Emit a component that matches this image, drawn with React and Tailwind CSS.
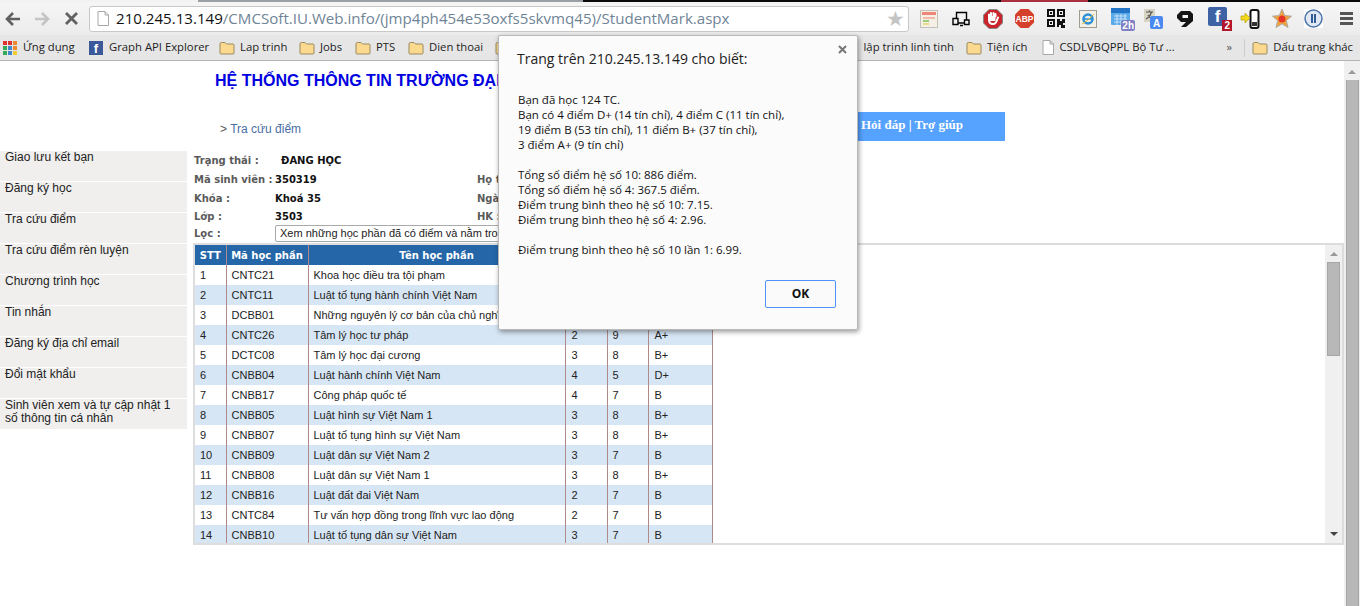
import React from 'react';

const ui = "font-['Open_Sans','Noto_Sans',sans-serif]";

const rows = [
  ['1', 'CNTC21', 'Khoa học điều tra tội phạm', '', '', ''],
  ['2', 'CNTC11', 'Luật tố tụng hành chính Việt Nam', '', '', ''],
  ['3', 'DCBB01', 'Những nguyên lý cơ bản của chủ nghĩa', '', '', ''],
  ['4', 'CNTC26', 'Tâm lý học tư pháp', '2', '9', 'A+'],
  ['5', 'DCTC08', 'Tâm lý học đại cương', '3', '8', 'B+'],
  ['6', 'CNBB04', 'Luật hành chính Việt Nam', '4', '5', 'D+'],
  ['7', 'CNBB17', 'Công pháp quốc tế', '4', '7', 'B'],
  ['8', 'CNBB05', 'Luật hình sự Việt Nam 1', '3', '8', 'B+'],
  ['9', 'CNBB07', 'Luật tố tụng hình sự Việt Nam', '3', '8', 'B+'],
  ['10', 'CNBB09', 'Luật dân sự Việt Nam 2', '3', '7', 'B'],
  ['11', 'CNBB08', 'Luật dân sự Việt Nam 1', '3', '8', 'B+'],
  ['12', 'CNBB16', 'Luật đất đai Việt Nam', '2', '7', 'B'],
  ['13', 'CNTC84', 'Tư vấn hợp đồng trong lĩnh vực lao động', '2', '7', 'B'],
  ['14', 'CNBB10', 'Luật tố tụng dân sự Việt Nam', '3', '7', 'B'],
];

const menu = [
  'Giao lưu kết bạn',
  'Đăng ký học',
  'Tra cứu điểm',
  'Tra cứu điểm rèn luyện',
  'Chương trình học',
  'Tin nhắn',
  'Đăng ký địa chỉ email',
  'Đổi mật khẩu',
];

const Folder = () => (
  <svg width="16" height="14" viewBox="0 0 16 14" className="shrink-0">
    <path d="M1 3 Q1 1.5 2.5 1.5 H6 L7.5 3 H14 Q15 3 15 4 V12 Q15 13 14 13 H2 Q1 13 1 12 Z" fill="#fbd98f" stroke="#9a8a60" />
  </svg>
);

const PageIcon = () => (
  <svg width="12" height="15" viewBox="0 0 12 15" className="shrink-0">
    <path d="M1 .5 H8 L11.5 4 V14.5 H1 Z M8 .5 V4 H11.5" fill="#fff" stroke="#a8a8a8" />
  </svg>
);

const Bookmark = ({ icon, label, className = '' }) => (
  <div className={`flex items-center gap-[5px] shrink-0 whitespace-nowrap ${className}`}>
    {icon}
    <span>{label}</span>
  </div>
);

const toolbarIcons = [
  <svg key="a" width="18" height="18" viewBox="0 0 18 18" className="ml-[11px]">
    <rect x=".5" y=".5" width="17" height="17" fill="#f4f0e6" stroke="#c4c0b8" />
    <rect x="2" y="2" width="14" height="3" fill="#f0857a" />
    <rect x="3" y="7" width="12" height="2" fill="#f3b9a8" />
    <rect x="3" y="10" width="6" height="2" fill="#9ecb7c" />
    <rect x="3" y="13" width="6" height="2" fill="#e8dc8c" />
  </svg>,
  <svg key="b" width="18" height="16" viewBox="0 0 18 16" className="ml-[14px]">
    <path d="M4.5 7 V1.5 H14.5 V9 M1 7.5 H6 V13.5 H1 Z M6 12 H12 M8 14.5 H11 M12.5 9 H17 V13.5 H12.5 Z" fill="none" stroke="#000" strokeWidth="1.4" />
  </svg>,
  <svg key="c" width="20" height="20" viewBox="0 0 20 20" className="ml-[13px]">
    <path d="M6 .5 H14 L19.5 6 V14 L14 19.5 H6 L.5 14 V6 Z" fill="#c8242c" stroke="#888" />
    <path d="M6 7 V5.5 M8 7 V4 M10.5 7 V4 M12.5 7.5 V5 M6 6 V11 Q6 15 10 15 Q13 15 14 11 L15 8.5" fill="none" stroke="#fff" strokeWidth="2" strokeLinecap="round" />
    <path d="M7 7 H12.5 V12 H7 Z" fill="#fff" />
  </svg>,
  <svg key="d" width="19" height="19" viewBox="0 0 19 19" className="ml-[12px]">
    <path d="M5.5 0 H13.5 L19 5.5 V13.5 L13.5 19 H5.5 L0 13.5 V5.5 Z" fill="#d5402b" />
    <text x="9.5" y="12.5" textAnchor="middle" fontFamily="Liberation Sans" fontWeight="700" fontSize="8.5" fill="#fff">ABP</text>
  </svg>,
  <svg key="e" width="19" height="19" viewBox="0 0 19 19" className="ml-[13px]" shapeRendering="crispEdges">
    <path d="M0 0 H8 V8 H0 Z M2 2 V6 H6 V2 Z M3 3 H5 V5 H3 Z M10 0 H18 V8 H10 Z M12 2 V6 H16 V2 Z M13 3 H15 V5 H13 Z M0 10 H8 V18 H0 Z M2 12 V16 H6 V12 Z M3 13 H5 V15 H3 Z M10 10 H13 V12 H15 V10 H18 V14 H16 V16 H18 V19 H14 V16 H12 V18 H10 Z" fillRule="evenodd" fill="#111" />
  </svg>,
  <svg key="f" width="18" height="19" viewBox="0 0 18 19" className="ml-[13px]">
    <rect x=".5" y="1.5" width="17" height="17" fill="#f3f0e8" stroke="#a09c90" />
    <circle cx="9" cy="10" r="4.5" fill="none" stroke="#2a8fd8" strokeWidth="2.5" />
    <path d="M4 10 H14" stroke="#2a8fd8" strokeWidth="1.5" />
    <path d="M3 15 Q8 13 15 5" fill="none" stroke="#e2b431" strokeWidth="1" />
  </svg>,
  <div key="g" className="relative ml-[14px] w-[24px] h-[24px] shrink-0">
    <svg width="19" height="19" viewBox="0 0 19 19">
      <rect x="0" y="1" width="19" height="17" rx="1" fill="#5aa9e8" />
      <rect x="0" y="1" width="19" height="5" fill="#2274c6" />
      <path d="M3 9 H16 M3 12 H16 M3 15 H16 M6 7 V18 M10 7 V18 M14 7 V18" stroke="#c8e2f8" strokeWidth="1" />
    </svg>
    <span className="absolute right-0 bottom-0 bg-[#7f7fc4] rounded-[2px] text-white text-[10px] font-bold leading-[11px] px-[1px] font-['Liberation_Sans',sans-serif]">2h</span>
  </div>,
  <svg key="h" width="20" height="20" viewBox="0 0 20 20" className="ml-[8px]">
    <rect x="1" y="0" width="11" height="13" fill="#d8d4c4" />
    <path d="M3 3 H10 M6.5 1.5 V3 M8.5 3 Q7 8 3 10 M5 6 Q7 9 9 10" fill="none" stroke="#555" strokeWidth="1.2" />
    <rect x="7" y="7" width="13" height="13" rx="2" fill="#4a8af0" />
    <text x="13.5" y="17.5" textAnchor="middle" fontFamily="Liberation Sans" fontWeight="700" fontSize="10" fill="#fff">A</text>
  </svg>,
  <svg key="i" width="18" height="18" viewBox="0 0 18 18" className="ml-[13px]">
    <path d="M1 5 L5 1 H14 L17 4 V11 L10 17 H5 L10 12 H5 L1 8 Z M6.5 5 V8 H12 V5 Z" fillRule="evenodd" fill="#141414" />
  </svg>,
  <div key="j" className="relative ml-[14px] w-[24px] h-[24px] shrink-0">
    <div className="w-[19px] h-[19px] rounded-[2px] bg-[#3f62a5] text-white text-[17px] font-bold leading-[20px] text-center font-['Liberation_Sans',sans-serif]">f</div>
    <span className="absolute right-0 bottom-0 bg-[#b3152a] text-white text-[10px] font-bold leading-[11px] px-[2px] font-['Liberation_Sans',sans-serif]">2</span>
  </div>,
  <svg key="k" width="20" height="20" viewBox="0 0 20 20" className="ml-[8px]">
    <rect x="10.5" y="1" width="8" height="18" rx="2" fill="#fff" stroke="#111" strokeWidth="2" />
    <rect x="12" y="13" width="5" height="4" fill="#333" />
    <path d="M1 7 H5 V4 L10 9 L5 14 V11 H1 Z" fill="#f4d81c" stroke="#b8a010" strokeWidth=".7" />
  </svg>,
  <svg key="l" width="20" height="20" viewBox="0 0 20 20" className="ml-[12px]">
    <path d="M10 0 L12.7 6.6 L19.5 7.2 L14.3 11.6 L16 18.5 L10 14.8 L4 18.5 L5.7 11.6 L.5 7.2 L7.3 6.6 Z" fill="#f2a23a" stroke="#b0a8a0" />
    <circle cx="10" cy="10" r="3.5" fill="#e5352a" />
  </svg>,
  <svg key="m" width="19" height="19" viewBox="0 0 19 19" className="ml-[12px]">
    <rect width="19" height="19" fill="#fff" />
    <circle cx="9.5" cy="9.5" r="8.5" fill="#dfe8f3" stroke="#4d74a8" strokeWidth="1.5" />
    <path d="M8 5 V14 M11 5 V14" stroke="#2f5c96" strokeWidth="2" />
  </svg>,
  <svg key="n" width="13" height="13" viewBox="0 0 13 13" className="ml-[17px]">
    <path d="M0 0 H13 V3 H0 Z M0 5 H13 V8 H0 Z M0 10 H13 V13 H0 Z" fill="#555" />
  </svg>,
];

const Cell = ({ className = '', children }) => (
  <td className={`px-[5px] border-r border-[#b08a8a] whitespace-nowrap overflow-hidden ${className}`}>{children}</td>
);

const InfoLabel = ({ className = '', children }) => (
  <span className={`text-[#5a5a5a] font-bold ${className}`}>{children}</span>
);

const StudentTable = () => (
  <table className="border-collapse table-fixed w-[518px] text-[11px] text-[#222]">
    <thead>
      <tr className="h-[20px] bg-[#2566a8] text-white font-bold text-center font-['DejaVu_Sans',sans-serif] text-[10px]">
        <td className="w-[31px] border-r border-[#b08a8a]">STT</td>
        <td className="w-[82px] border-r border-[#b08a8a]">Mã học phần</td>
        <td className="w-[257px] border-r border-[#b08a8a]">Tên học phần</td>
        <td className="w-[42px] border-r border-[#b08a8a]"></td>
        <td className="w-[41px] border-r border-[#b08a8a]"></td>
        <td className="border-r border-[#b08a8a]"></td>
      </tr>
    </thead>
    <tbody>
      {rows.map((r, i) => (
        <tr key={r[0]} className={`h-[20px] ${i % 2 ? 'bg-[#d7e6f5]' : 'bg-white'}`}>
          <Cell>{r[0]}</Cell>
          <Cell>{r[1]}</Cell>
          <Cell>{r[2]}</Cell>
          <Cell className="pl-[6px]">{r[3]}</Cell>
          <Cell className="pl-[5px]">{r[4]}</Cell>
          <Cell className="pl-[6px]">{r[5]}</Cell>
        </tr>
      ))}
    </tbody>
  </table>
);

const Alert = () => (
  <div className={`absolute left-[498px] top-[35px] w-[360px] h-[295px] bg-[#fbfbfb] border border-[#b8b8b8] shadow-[1px_2px_5px_rgba(0,0,0,0.4)] rounded-[2px] text-[#111] ${ui}`}>
    <svg width="9" height="9" viewBox="0 0 9 9" className="absolute right-[10px] top-[9px]">
      <path d="M1 1 L8 8 M8 1 L1 8" fill="none" stroke="#777" strokeWidth="2" />
    </svg>
    <div className="pl-[18px] pt-[13px] text-[14px] leading-[20px] text-[#222]">Trang trên 210.245.13.149 cho biết:</div>
    <div className="pl-[19px] pt-[23px] text-[11.5px] leading-[15px]">
      <p>Bạn đã học 124 TC.</p>
      <p>Bạn có 4 điểm D+ (14 tín chỉ), 4 điểm C (11 tín chỉ),</p>
      <p>19 điểm B (53 tín chỉ), 11 điểm B+ (37 tín chỉ),</p>
      <p>3 điểm A+ (9 tín chỉ)</p>
      <p className="mt-[15px]">Tổng số điểm hệ số 10: 886 điểm.</p>
      <p>Tổng số điểm hệ số 4: 367.5 điểm.</p>
      <p>Điểm trung bình theo hệ số 10: 7.15.</p>
      <p>Điểm trung bình theo hệ số 4: 2.96.</p>
      <p className="mt-[15px]">Điểm trung bình theo hệ số 10 lần 1: 6.99.</p>
    </div>
    <div className="absolute right-[21px] bottom-[21px] w-[71px] h-[28px] border border-[#4d90fe] rounded-[2px] bg-[#fafafa] flex items-center justify-center text-[12px] font-bold">OK</div>
  </div>
);

const App = () => {
  return (
    <div className="relative w-[1360px] h-[606px] overflow-hidden bg-white flex flex-col font-['Liberation_Sans',sans-serif]">
      <div className="h-[2px] shrink-0 flex">
        <div className="w-[198px] bg-[#f2f2f2]" />
        <div className="w-[385px] bg-[#9aa0a6]" />
        <div className="w-[418px] bg-[#0a0a0a]" />
        <div className="w-[87px] bg-[#a8303f]" />
        <div className="grow bg-[#0a0a0a]" />
      </div>

      {/* toolbar */}
      <div className="h-[33px] shrink-0 bg-gradient-to-b from-[#f5f5f5] to-[#ececec] flex items-center">
        <div className="w-[89px] flex items-center pl-[5px] shrink-0">
          <svg width="16" height="14" viewBox="0 0 16 14"><path d="M8 1 L2 7 L8 13 M2 7 H15" fill="none" stroke="#606060" strokeWidth="2.6" /></svg>
          <svg width="16" height="14" viewBox="0 0 16 14" className="ml-[13px]"><path d="M8 1 L14 7 L8 13 M14 7 H1" fill="none" stroke="#c4c4c4" strokeWidth="2.6" /></svg>
          <svg width="13" height="13" viewBox="0 0 13 13" className="ml-[15px]"><path d="M1 1 L12 12 M12 1 L1 12" fill="none" stroke="#606060" strokeWidth="2.8" /></svg>
        </div>
        <div className={`w-[820px] h-[26px] shrink-0 bg-white border border-[#c8c8c8] rounded-[3px] flex items-center pl-[7px] pr-[3px] text-[15.1px] ${ui}`}>
          <PageIcon />
          <span className="ml-[7px] text-[#111]">210.245.13.149</span>
          <span className="text-[#6f8496] whitespace-nowrap">/CMCSoft.IU.Web.info/(jmp4ph454e53oxfs5skvmq45)/StudentMark.aspx</span>
          <span className="ml-auto text-[#c4c4c4] text-[21px] leading-none">★</span>
        </div>
        {toolbarIcons}
      </div>

      {/* bookmarks */}
      <div className={`h-[26px] shrink-0 bg-[#e6e6e6] border-b border-[#b4b4b4] flex items-center text-[11.3px] text-[#222] pl-[3px] pr-[7px] ${ui}`}>
        <div className="grid grid-cols-3 gap-[1px] w-[14px] h-[14px] shrink-0">
          {['#d33', '#d33', '#e83', '#3a5', '#48c', '#e83', '#3a5', '#48c', '#ec3'].map((c, i) => (
            <div key={i} className="w-[4px] h-[4px]" style={{ background: c }} />
          ))}
        </div>
        <span className="ml-[6px] shrink-0 w-[53px] whitespace-nowrap">Ứng dụng</span>
        <div className="ml-[13px] w-[14px] h-[14px] shrink-0 bg-[#3b5998] text-white text-[13px] font-bold leading-[15px] text-center font-['Liberation_Sans',sans-serif]">f</div>
        <span className="ml-[6px] shrink-0 w-[99px] whitespace-nowrap">Graph API Explorer</span>
        <Bookmark icon={<Folder />} label="Lap trinh" className="ml-[11px] w-[68px]" />
        <Bookmark icon={<Folder />} label="Jobs" className="ml-[12px] w-[44px]" />
        <Bookmark icon={<Folder />} label="PTS" className="ml-[12px] w-[41px]" />
        <Bookmark icon={<Folder />} label="Dien thoai" className="ml-[12px] w-[75px]" />
        <div className="w-[471px] shrink-0 flex items-center justify-between">
          <div className="ml-[12px]"><Folder /></div>
          <span>lập trinh linh tinh</span>
        </div>
        <Bookmark icon={<Folder />} label="Tiện ích" className="ml-[12px]" />
        <Bookmark icon={<PageIcon />} label="CSDLVBQPPL Bộ Tư ..." className="ml-[15px]" />
        <span className="ml-auto text-[#555]">»</span>
        <div className="ml-[12px] w-px h-[18px] bg-[#ccc]" />
        <Bookmark icon={<Folder />} label="Dấu trang khác" className="ml-[7px]" />
      </div>

      {/* page */}
      <div className="grow flex min-h-0">
        <div className="w-[1344px] shrink-0 flex flex-col">
          <div className="h-[51px] pl-[215px] pt-[10px] text-[16px] leading-[20px] font-bold text-[#0000e0] whitespace-nowrap">HỆ THỐNG THÔNG TIN TRƯỜNG ĐẠI HỌC</div>
          <div className="h-[39px] flex items-start">
            <div className="w-[858px] pl-[220px] pt-[9px] text-[12px] leading-[16px] shrink-0">
              <span className="text-[#555]">&gt; </span><span className="text-[#4a6fa5]">Tra cứu điểm</span>
            </div>
            <div className="w-[147px] h-[29px] bg-[#55a2ff] text-white font-bold text-[13px] leading-[25px] pl-[3px] font-['Liberation_Serif',serif]">Hỏi đáp | Trợ giúp</div>
          </div>

          <div className="flex">
            <div className="w-[187px] shrink-0 flex flex-col gap-px text-[12px] leading-[13px] text-[#222]">
              {menu.map(m => (
                <div key={m} className="h-[30px] bg-[#f0efee] pl-[5px]">{m}</div>
              ))}
              <div className="h-[30px] bg-[#f0efee] pl-[5px]">Sinh viên xem và tự cập nhật 1<br />số thông tin cá nhân</div>
            </div>

            <div className="grow min-w-0 pl-[6px] font-['DejaVu_Sans',sans-serif] text-[10px] text-[#111]">
              <div className="h-[92px] pl-px">
                <div className="flex h-[19px] items-center">
                  <InfoLabel className="w-[87px]">Trạng thái :</InfoLabel>
                  <b>ĐANG HỌC</b>
                </div>
                <div className="flex h-[19px] items-center">
                  <InfoLabel className="w-[81px]">Mã sinh viên :</InfoLabel>
                  <b className="w-[202px]">350319</b>
                  <InfoLabel>Họ tên :</InfoLabel>
                </div>
                <div className="flex h-[18px] items-center">
                  <InfoLabel className="w-[81px]">Khóa :</InfoLabel>
                  <b className="w-[202px]">Khoá 35</b>
                  <InfoLabel>Ngày sinh :</InfoLabel>
                </div>
                <div className="flex h-[18px] items-center">
                  <InfoLabel className="w-[81px]">Lớp :</InfoLabel>
                  <b className="w-[202px]">3503</b>
                  <InfoLabel>HK :</InfoLabel>
                </div>
                <div className="flex h-[17px] items-center">
                  <InfoLabel className="w-[81px]">Lọc :</InfoLabel>
                  <div className="w-[400px] h-[17px] border border-[#aaa] bg-white pl-[4px] rounded-[2px] text-[11px] leading-[15px] text-[#222] font-['Liberation_Sans',sans-serif] whitespace-nowrap overflow-hidden">Xem những học phần đã có điểm và nằm trong</div>
                </div>
              </div>

              <div className="h-[302px] w-[1151px] border-2 border-[#dddddd] flex font-['Liberation_Sans',sans-serif]">
                <div className="grow overflow-hidden bg-white">
                  <StudentTable />
                </div>
                <div className="w-[17px] shrink-0 bg-[#f0f0f0] flex flex-col items-center">
                  <div className="w-0 h-0 mt-[7px] border-x-[4px] border-b-[4px] border-x-transparent border-b-[#999]" />
                  <div className="w-[13px] h-[94px] mt-[6px] bg-[#b8b8b8] border border-[#a6a6a6]" />
                  <div className="mt-auto mb-[7px] w-0 h-0 border-x-[4px] border-t-[4px] border-x-transparent border-t-[#444]" />
                </div>
              </div>
            </div>
          </div>
        </div>

        {/* window scrollbar */}
        <div className="w-[16px] shrink-0 bg-[#f0f0f0] flex flex-col items-center">
          <div className="w-0 h-0 mt-[9px] border-x-[4px] border-b-[4px] border-x-transparent border-b-[#999]" />
          <div className="w-[13px] grow mt-[6px] bg-[#b8b8b8] border-x border-[#a6a6a6]" />
        </div>
      </div>

      <Alert />
    </div>
  );
};

export default App;
